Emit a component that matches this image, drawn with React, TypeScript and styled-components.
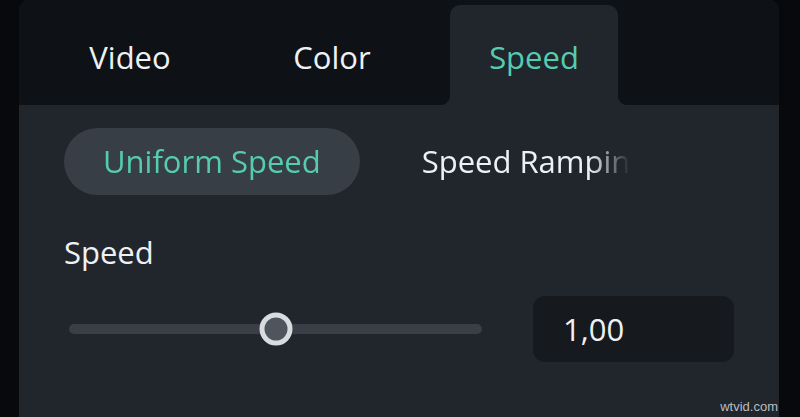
import React from "react";
import styled, { createGlobalStyle } from "styled-components";

const colors = {
  page: "#07090c",
  bar: "#0e1217",
  panel: "#21252c",
  pill: "#383e46",
  track: "#3a3f47",
  field: "#16191d",
  text: "#eef1f4",
  accent: "#55ccb0",
};

const GlobalStyle = createGlobalStyle`
  html, body {
    margin: 0;
    padding: 0;
    background: ${colors.page};
    overflow: hidden;
  }
  body {
    font-family: "Open Sans", "Noto Sans", sans-serif;
  }
`;

const Page = styled.div`
  height: 417px;
  padding-left: 19px;
  position: relative;
`;

const Panel = styled.div`
  width: 760px;
  height: 100%;
  background: ${colors.panel};
  border-radius: 10px 10px 0 0;
  overflow: hidden;
  display: flex;
  flex-direction: column;
`;

const TabBar = styled.div`
  display: flex;
  align-items: flex-end;
  height: 105px;
  padding-left: 10px;
  background: ${colors.bar};
  flex-shrink: 0;
`;

interface TabProps {
  $active?: boolean;
}

const Tab = styled.div<TabProps>`
  position: relative;
  display: flex;
  align-items: center;
  justify-content: center;
  width: 168px;
  height: 100px;
  margin: 0 17px;
  box-sizing: border-box;
  padding-top: 4px;
  font-size: 31px;
  line-height: 37px;
  color: ${({ $active }) => ($active ? colors.accent : colors.text)};
  background: ${({ $active }) => ($active ? colors.panel : "transparent")};
  border-radius: 10px 10px 0 0;

  &::before,
  &::after {
    content: "";
    display: ${({ $active }) => ($active ? "block" : "none")};
    position: absolute;
    bottom: 0;
    width: 10px;
    height: 10px;
  }
  &::before {
    left: -10px;
    background: radial-gradient(circle at 0 0, transparent 10px, ${colors.panel} 10.5px);
  }
  &::after {
    right: -10px;
    background: radial-gradient(circle at 100% 0, transparent 10px, ${colors.panel} 10.5px);
  }
`;

const Body = styled.div`
  padding: 23px 45px 0;
  display: flex;
  flex-direction: column;
`;

const Segments = styled.div`
  display: flex;
  align-items: center;
  gap: 23px;
  width: 566px;
  overflow: hidden;
  white-space: nowrap;
  mask-image: linear-gradient(to right, #000 calc(100% - 40px), transparent);
`;

const Segment = styled.div<TabProps>`
  flex-shrink: 0;
  height: 67px;
  padding: 0 39px;
  display: flex;
  align-items: center;
  border-radius: 34px;
  font-size: 31px;
  line-height: 37px;
  color: ${({ $active }) => ($active ? colors.accent : colors.text)};
  background: ${({ $active }) => ($active ? colors.pill : "transparent")};
`;

const Label = styled.div`
  margin-top: 39px;
  font-size: 31px;
  line-height: 37px;
  color: ${colors.text};
`;

const SliderRow = styled.div`
  margin-top: 25px;
  display: flex;
  align-items: center;
  gap: 51px;
`;

const Slider = styled.div`
  position: relative;
  width: 413px;
  height: 10px;
  margin-left: 5px;
  border-radius: 5px;
  background: ${colors.track};
`;

const Thumb = styled.div`
  position: absolute;
  top: 50%;
  width: 33px;
  height: 33px;
  box-sizing: border-box;
  border: 5px solid #d8dce0;
  border-radius: 50%;
  background: #4f555d;
  transform: translate(-50%, -50%);
`;

const ValueField = styled.div`
  width: 201px;
  height: 66px;
  box-sizing: border-box;
  padding-left: 30px;
  display: flex;
  align-items: center;
  border-radius: 12px;
  background: ${colors.field};
  font-size: 31px;
  line-height: 37px;
  color: ${colors.text};
`;

const Watermark = styled.div`
  position: absolute;
  right: 22px;
  bottom: 3px;
  font-family: "Liberation Sans", Arial, sans-serif;
  font-size: 13px;
  color: #b9bdc2;
`;

const tabs = ["Video", "Color", "Speed"];

export default function App() {
  const value = 1;
  const fraction = 0.5;
  return (
    <>
      <GlobalStyle />
      <Page>
        <Panel>
          <TabBar>
            {tabs.map((t) => (
              <Tab key={t} $active={t === "Speed"}>
                {t}
              </Tab>
            ))}
          </TabBar>
          <Body>
            <Segments>
              <Segment $active>Uniform Speed</Segment>
              <Segment>Speed Ramping</Segment>
            </Segments>
            <Label>Speed</Label>
            <SliderRow>
              <Slider>
                <Thumb style={{ left: `${fraction * 100}%` }} />
              </Slider>
              <ValueField>{value.toFixed(2).replace(".", ",")}</ValueField>
            </SliderRow>
          </Body>
        </Panel>
        <Watermark>wtvid.com</Watermark>
      </Page>
    </>
  );
}
